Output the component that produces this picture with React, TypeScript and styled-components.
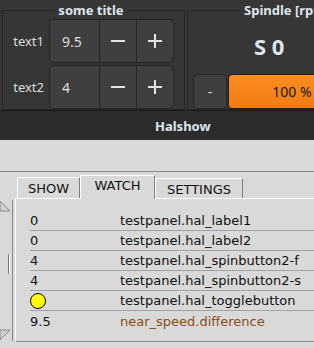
import { FC } from "react";
import styled, { createGlobalStyle } from "styled-components";

const GlobalStyle = createGlobalStyle`
  html, body {
    margin: 0;
    padding: 0;
    background: #d9d9d9;
  }
`;

const rows = [
  { value: "0", name: "testpanel.hal_label1" },
  { value: "0", name: "testpanel.hal_label2" },
  { value: "4", name: "testpanel.hal_spinbutton2-f" },
  { value: "4", name: "testpanel.hal_spinbutton2-s" },
  { value: "led", name: "testpanel.hal_togglebutton" },
  { value: "9.5", name: "near_speed.difference", param: true },
];

const spins = [
  { label: "text1", value: "9.5" },
  { label: "text2", value: "4" },
];

const MinusIcon: FC = () => (
  <svg width="14" height="14" viewBox="0 0 14 14">
    <rect x="0" y="6" width="14" height="2" fill="#e2e2e2" />
  </svg>
);

const PlusIcon: FC = () => (
  <svg width="14" height="14" viewBox="0 0 14 14">
    <rect x="0" y="6" width="14" height="2" fill="#e2e2e2" />
    <rect x="6" y="0" width="2" height="14" fill="#e2e2e2" />
  </svg>
);

const App: FC = () => {
  return (
    <Screen>
      <GlobalStyle />
      <TopPanel>
        <Frame $width={183}>
          <FrameTitle>some title</FrameTitle>
          {spins.map((s) => (
            <SpinRow key={s.label}>
              <SpinLabel>{s.label}</SpinLabel>
              <SpinBox>
                <SpinValue>{s.value}</SpinValue>
                <SpinButton>
                  <MinusIcon />
                </SpinButton>
                <SpinButton>
                  <PlusIcon />
                </SpinButton>
              </SpinBox>
            </SpinRow>
          ))}
        </Frame>
        <Frame $width={175}>
          <FrameTitle $offset={52}>Spindle [rpm]</FrameTitle>
          <SpeedValue>S 0</SpeedValue>
          <SpeedControls>
            <DarkButton>-</DarkButton>
            <OrangeBar>100 %</OrangeBar>
          </SpeedControls>
        </Frame>
      </TopPanel>
      <TitleBar>Halshow</TitleBar>
      <Toolbar />
      <Lower>
        <LeftPane>
          <Scrollbar>
            <ScrollArrow>
              {/* right half of the up arrow, the rest is scrolled off */}
              <svg width="13" height="12" viewBox="0 0 13 12">
                <polygon points="0,1 10,11 0,11" fill="#cfcfcf" stroke="#8a8a8a" />
                <line x1="12.5" y1="0" x2="12.5" y2="12" stroke="#8a8a8a" />
              </svg>
            </ScrollArrow>
            <ScrollTrack>
              <ScrollThumb />
            </ScrollTrack>
            <ScrollArrow>
              <svg width="13" height="12" viewBox="0 0 13 12">
                <polygon points="0,11 10,1 0,1" fill="#cfcfcf" stroke="#8a8a8a" />
                <line x1="12.5" y1="0" x2="12.5" y2="12" stroke="#8a8a8a" />
              </svg>
            </ScrollArrow>
          </Scrollbar>
        </LeftPane>
        <Notebook>
          <TabStrip>
            <Tab $width={63} $lift={2}>SHOW</Tab>
            <Tab $width={75} $lift={0} $active>
              WATCH
            </Tab>
            <Tab $width={88} $lift={3}>SETTINGS</Tab>
          </TabStrip>
          <WatchPanel>
            {rows.map((r) => (
              <WatchRow key={r.name}>
                <WatchValue>{r.value === "led" ? <Led /> : r.value}</WatchValue>
                <WatchName $param={r.param}>{r.name}</WatchName>
              </WatchRow>
            ))}
          </WatchPanel>
        </Notebook>
      </Lower>
    </Screen>
  );
};

export default App;

const Screen = styled.div`
  width: 314px;
  height: 348px;
  overflow: hidden;
  background: #d9d9d9;
`;

const TopPanel = styled.div`
  height: 110px;
  width: 420px;
  background: #363636;
  display: flex;
  gap: 2px;
  padding-left: 2px;
  box-sizing: border-box;
  overflow: hidden;
  font-family: "Noto Sans", sans-serif;
`;

const Frame = styled.fieldset<{ $width: number }>`
  margin: 2px 0 0 0;
  padding: 0 5px 0 0;
  width: ${(p) => p.$width}px;
  min-width: 0;
  box-sizing: border-box;
  border: 1px solid #262626;
  border-radius: 0;
  display: flex;
  flex-direction: column;
  gap: 2px;
  flex-shrink: 0;
`;

const FrameTitle = styled.legend<{ $offset?: number }>`
  padding: 0 4px;
  margin: ${(p) => (p.$offset !== undefined ? `0 0 0 ${p.$offset}px` : "0 auto")};
  font-weight: 700;
  font-size: 13px;
  line-height: 17px;
  color: #dfe5ec;
  white-space: nowrap;
`;

const SpinRow = styled.div`
  display: flex;
  height: 44px;
  align-items: stretch;
`;

const SpinLabel = styled.div`
  width: 46px;
  box-sizing: border-box;
  padding-right: 5px;
  text-align: right;
  align-self: center;
  font-size: 13px;
  color: #dcdcdc;
`;

const SpinBox = styled.div`
  display: flex;
  border: 1px solid #262626;
  border-radius: 4px;
  overflow: hidden;
  background: #3f3f3f;
`;

const SpinValue = styled.div`
  width: 50px;
  box-sizing: border-box;
  padding-left: 12px;
  display: flex;
  align-items: center;
  font-size: 14px;
  color: #dedede;
  border-right: 1px solid #262626;
`;

const SpinButton = styled.div`
  width: 36px;
  display: flex;
  align-items: center;
  justify-content: center;
  & + & {
    border-left: 1px solid #262626;
  }
`;

const SpeedValue = styled.div`
  height: 54px;
  display: flex;
  align-items: center;
  padding-left: 66px;
  font-size: 22px;
  font-weight: 700;
  color: #dfe5ec;
`;

const SpeedControls = styled.div`
  display: flex;
  gap: 1px;
  height: 35px;
  padding-left: 5px;
`;

const DarkButton = styled.div`
  width: 33px;
  border: 1px solid #262626;
  border-radius: 4px;
  background: #3f3f3f;
  color: #dcdcdc;
  font-size: 14px;
  display: flex;
  align-items: center;
  justify-content: center;
`;

const OrangeBar = styled.div`
  width: 126px;
  flex-shrink: 0;
  border: 1px solid #1a1a1a;
  border-radius: 4px;
  background: linear-gradient(#fd8e20, #f07b12);
  color: #1a1a1a;
  font-size: 14px;
  display: flex;
  align-items: center;
  justify-content: center;
`;

const TitleBar = styled.div`
  height: 29px;
  border-top: 1px solid #1a1a1a;
  background: #2c2c2c;
  padding-left: 155px;
  display: flex;
  align-items: center;
  font-family: "Noto Sans", sans-serif;
  font-weight: 700;
  font-size: 13px;
  color: #dfe5ec;
`;

const Toolbar = styled.div`
  height: 31px;
  border-bottom: 1px solid #8a8a8a;
  background: #d9d9d9;
`;

const Lower = styled.div`
  display: flex;
  font-family: "DejaVu Sans", sans-serif;
  font-size: 13px;
  color: #111;
`;

const LeftPane = styled.div`
  width: 15px;
  flex-shrink: 0;
  padding-top: 28px;
`;

const Scrollbar = styled.div`
  width: 13px;
  height: 141px;
  display: flex;
  flex-direction: column;
`;

const ScrollArrow = styled.div`
  height: 12px;
  line-height: 0;
`;

const ScrollTrack = styled.div`
  flex: 1;
  border-right: 1px solid #8a8a8a;
  display: flex;
  justify-content: flex-end;
  padding-right: 2px;
  align-items: center;
`;

const ScrollThumb = styled.div`
  width: 1px;
  height: 20px;
  margin-top: -14px;
  background: #777;
  border-right: 1px solid #fff;
`;

const Notebook = styled.div`
  flex: 1;
  display: flex;
  flex-direction: column;
`;

const TabStrip = styled.div`
  height: 26px;
  display: flex;
  align-items: flex-end;
  padding-left: 2px;
`;

const Tab = styled.div<{ $width: number; $lift: number; $active?: boolean }>`
  position: relative;
  z-index: ${(p) => (p.$active ? 1 : 0)};
  width: ${(p) => p.$width}px;
  height: ${(p) => 23 - p.$lift + (p.$active ? 1 : 0)}px;
  margin-bottom: ${(p) => (p.$active ? -1 : 0)}px;
  box-sizing: border-box;
  background: #d9d9d9;
  border-top: 1px solid #fff;
  border-left: 1px solid #fff;
  border-right: 1px solid #7e7e7e;
  display: flex;
  align-items: ${(p) => (p.$active ? "flex-start" : "center")};
  padding-top: ${(p) => (p.$active ? 2 : 1)}px;
  justify-content: center;
`;

const WatchPanel = styled.div`
  height: 144px;
  box-sizing: border-box;
  border-top: 1px solid #fff;
  border-left: 1px solid #fff;
  border-bottom: 1px solid #8a8a8a;
  padding: 12px 0 0 14px;
`;

const WatchRow = styled.div`
  display: flex;
  height: 20px;
  box-sizing: border-box;
  align-items: center;
  border-bottom: 1px solid #a3a3a3;
  &:last-child {
    border-bottom: none;
  }
`;

const WatchValue = styled.div`
  width: 90px;
  display: flex;
  align-items: center;
`;

const WatchName = styled.div<{ $param?: boolean }>`
  white-space: nowrap;
  color: ${(p) => (p.$param ? "#8b4d14" : "#111")};
`;

const Led = styled.div`
  width: 14px;
  height: 14px;
  border-radius: 50%;
  background: #ffff00;
  border: 1px solid #000;
`;
